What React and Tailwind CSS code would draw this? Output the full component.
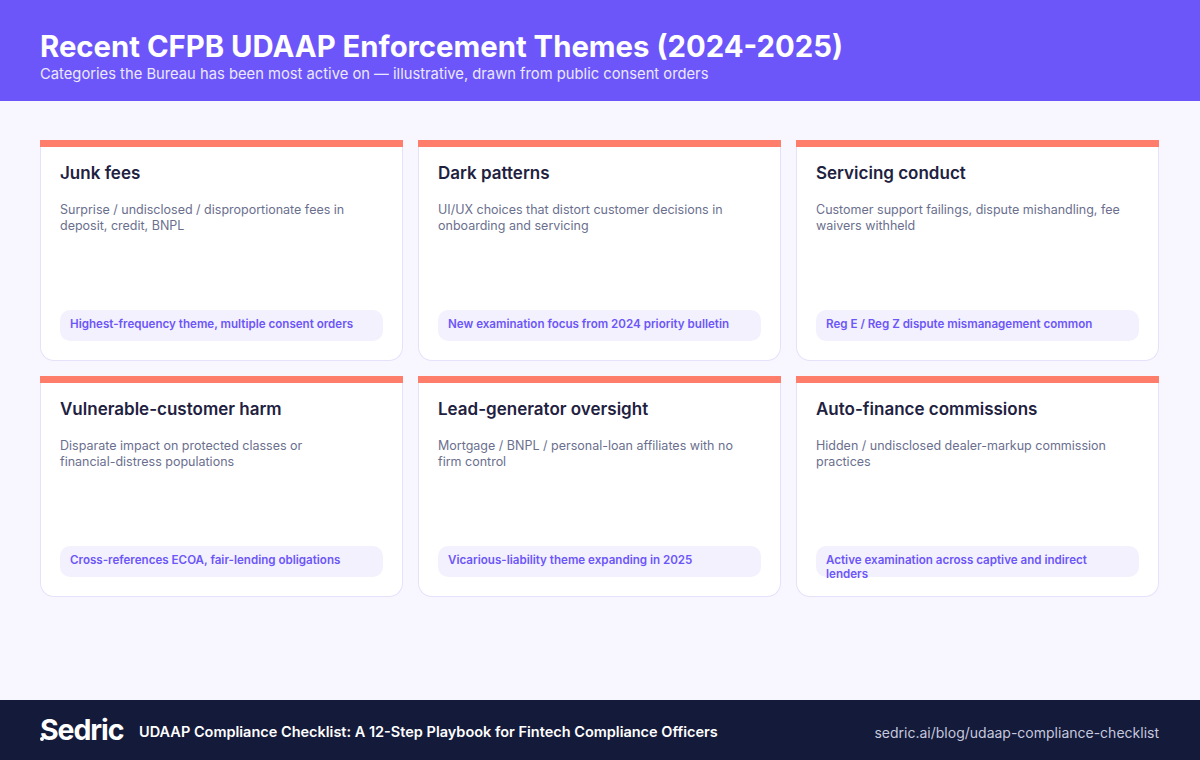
const themes = [
  { title: 'Junk fees', body: 'Surprise / undisclosed / disproportionate fees in deposit, credit, BNPL', note: 'Highest-frequency theme, multiple consent orders' },
  { title: 'Dark patterns', body: 'UI/UX choices that distort customer decisions in onboarding and servicing', note: 'New examination focus from 2024 priority bulletin' },
  { title: 'Servicing conduct', body: 'Customer support failings, dispute mishandling, fee waivers withheld', note: 'Reg E / Reg Z dispute mismanagement common' },
  { title: 'Vulnerable-customer harm', body: 'Disparate impact on protected classes or\nfinancial-distress populations', note: 'Cross-references ECOA, fair-lending obligations' },
  { title: 'Lead-generator oversight', body: 'Mortgage / BNPL / personal-loan affiliates with no\nfirm control', note: 'Vicarious-liability theme expanding in 2025' },
  { title: 'Auto-finance commissions', body: 'Hidden / undisclosed dealer-markup commission practices', note: 'Active examination across captive and indirect\nlenders' },
];

function ThemeCard({ title, body, note }) {
  return (
    <div className="flex h-[221px] flex-col">
      <div className="h-[7px] shrink-0 bg-[#ff7d6b]" />
      <div className="flex flex-1 flex-col rounded-b-[14px] border border-t-0 border-[#e4e1fb] bg-white px-[19px] pb-[19px] pt-[14px]">
        <h3 className="text-[17px] font-semibold leading-[24px] text-[#1e2140]">{title}</h3>
        <p className="mt-[17px] whitespace-pre-line text-[12.5px] leading-[16px] text-[#6b6f8e]">{body}</p>
        <div className="mt-auto h-[31px] whitespace-pre-line rounded-[10px] bg-[#f3f1fe] px-[10px] py-[7px] text-[11.6px] font-semibold leading-[14px] text-[#6c56f9]">
          {note}
        </div>
      </div>
    </div>
  );
}

export default function App() {
  return (
    <div className="flex h-[760px] w-[1200px] flex-col bg-[#f8f7ff] font-['Inter',sans-serif]">
      <header className="h-[101px] bg-[#6c56f9] px-[40px] pt-[28px] text-white">
        <h1 className="text-[29.3px] font-bold leading-[38px]">Recent CFPB UDAAP Enforcement Themes (2024-2025)</h1>
        <p className="-mt-px text-[14.75px] leading-[18px] text-[#ebe8ff]">Categories the Bureau has been most active on — illustrative, drawn from public consent orders</p>
      </header>

      <main className="flex-1 px-[40px] pt-[39px] pr-[41px]">
        <div className="grid grid-cols-3 gap-[15px]">
          {themes.map((theme) => (
            <ThemeCard key={theme.title} {...theme} />
          ))}
        </div>
      </main>

      <footer className="flex h-[60px] items-center bg-[#141a3a] pl-[40px] pr-[41px] text-white">
        <span className="relative mr-[15px] w-[84px] text-[28.5px] font-bold leading-none tracking-[-1.1px]">
          Sedric
          <span className="absolute bottom-[3px] left-0 h-[4px] w-[4px] rounded-full bg-white" />
        </span>
        <span className="pt-[4px] text-[14.5px] font-semibold">UDAAP Compliance Checklist: A 12-Step Playbook for Fintech Compliance Officers</span>
        <span className="ml-auto pt-[4px] text-[14px] text-[#c5c8de]">sedric.ai/blog/udaap-compliance-checklist</span>
      </footer>
    </div>
  );
}
